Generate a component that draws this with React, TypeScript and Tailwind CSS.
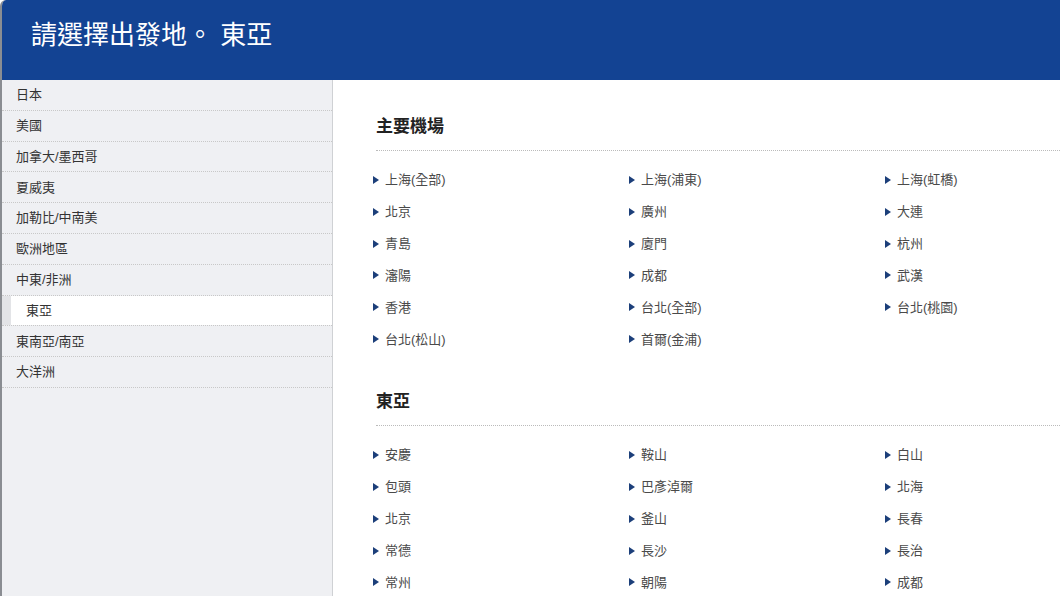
import React from "react"

const regions = ["日本", "美國", "加拿大/墨西哥", "夏威夷", "加勒比/中南美", "歐洲地區", "中東/非洲", "東亞", "東南亞/南亞", "大洋洲"]

const major = [
  "上海(全部)", "上海(浦東)", "上海(虹橋)",
  "北京", "廣州", "大連",
  "青島", "廈門", "杭州",
  "瀋陽", "成都", "武漢",
  "香港", "台北(全部)", "台北(桃園)",
  "台北(松山)", "首爾(金浦)",
]

const eastAsia = [
  "安慶", "鞍山", "白山",
  "包頭", "巴彥淖爾", "北海",
  "北京", "釜山", "長春",
  "常德", "長沙", "長治",
  "常州", "朝陽", "成都",
]

function CityGrid({ cities }: { cities: string[] }) {
  return (
    <ul className="grid grid-cols-[256px_256px_1fr] gap-y-[10.3px] pl-[371px]">
      {cities.map((c, i) => (
        <li key={i} className="flex items-center h-[21.6px] text-[13px] text-[#4a4a4a]">
          <span className="mr-[6px] w-0 h-0 border-y-[4px] border-y-transparent border-l-[6px] border-l-[#1c3f7a]" />
          {c}
        </li>
      ))}
    </ul>
  )
}

function Section({ title, cities }: { title: string; cities: string[] }) {
  return (
    <section>
      <h2 className="ml-[374px] text-[17px] font-bold text-[#222] leading-[24px]">{title}</h2>
      <div className="ml-[374px] mt-[11px] border-t border-dotted border-[#bbb]" />
      <div className="mt-[18px]">
        <CityGrid cities={cities} />
      </div>
    </section>
  )
}

export default function App() {
  return (
    <div
      className="w-[1060px] h-[596px] overflow-hidden bg-white border-l-2 border-[#8a8d92] rounded-tl-[6px] flex flex-col"
      style={{ fontFamily: '"Liberation Sans", "Noto Sans CJK TC", sans-serif' }}
    >
      <header className="h-[80px] shrink-0 bg-[#134393] flex items-center pl-[29px]">
        <h1 className="text-white text-[26px] leading-none pb-[10px]">請選擇出發地。 東亞</h1>
      </header>
      <div className="flex-1 relative">
        <aside className="absolute left-0 top-0 bottom-0 w-[331px] bg-[#eff0f3] border-r border-[#cfd1d4]">
          {regions.map((r) =>
            r === "東亞" ? (
              <div key={r} className="h-[30.8px] flex border-b border-dotted border-[#c8c8c8]">
                <div className="w-[9px] bg-[#e3e4e7]" />
                <div className="flex-1 bg-white flex items-center pl-[15px] text-[13px] text-[#333]">{r}</div>
              </div>
            ) : (
              <div key={r} className="h-[30.8px] flex items-center pl-[14px] text-[13px] text-[#333] border-b border-dotted border-[#c8c8c8]">
                {r}
              </div>
            )
          )}
        </aside>
        <main className="pt-[35px]">
          <Section title="主要機場" cities={major} />
          <div className="mt-[40px]">
            <Section title="東亞" cities={eastAsia} />
          </div>
        </main>
      </div>
    </div>
  )
}
